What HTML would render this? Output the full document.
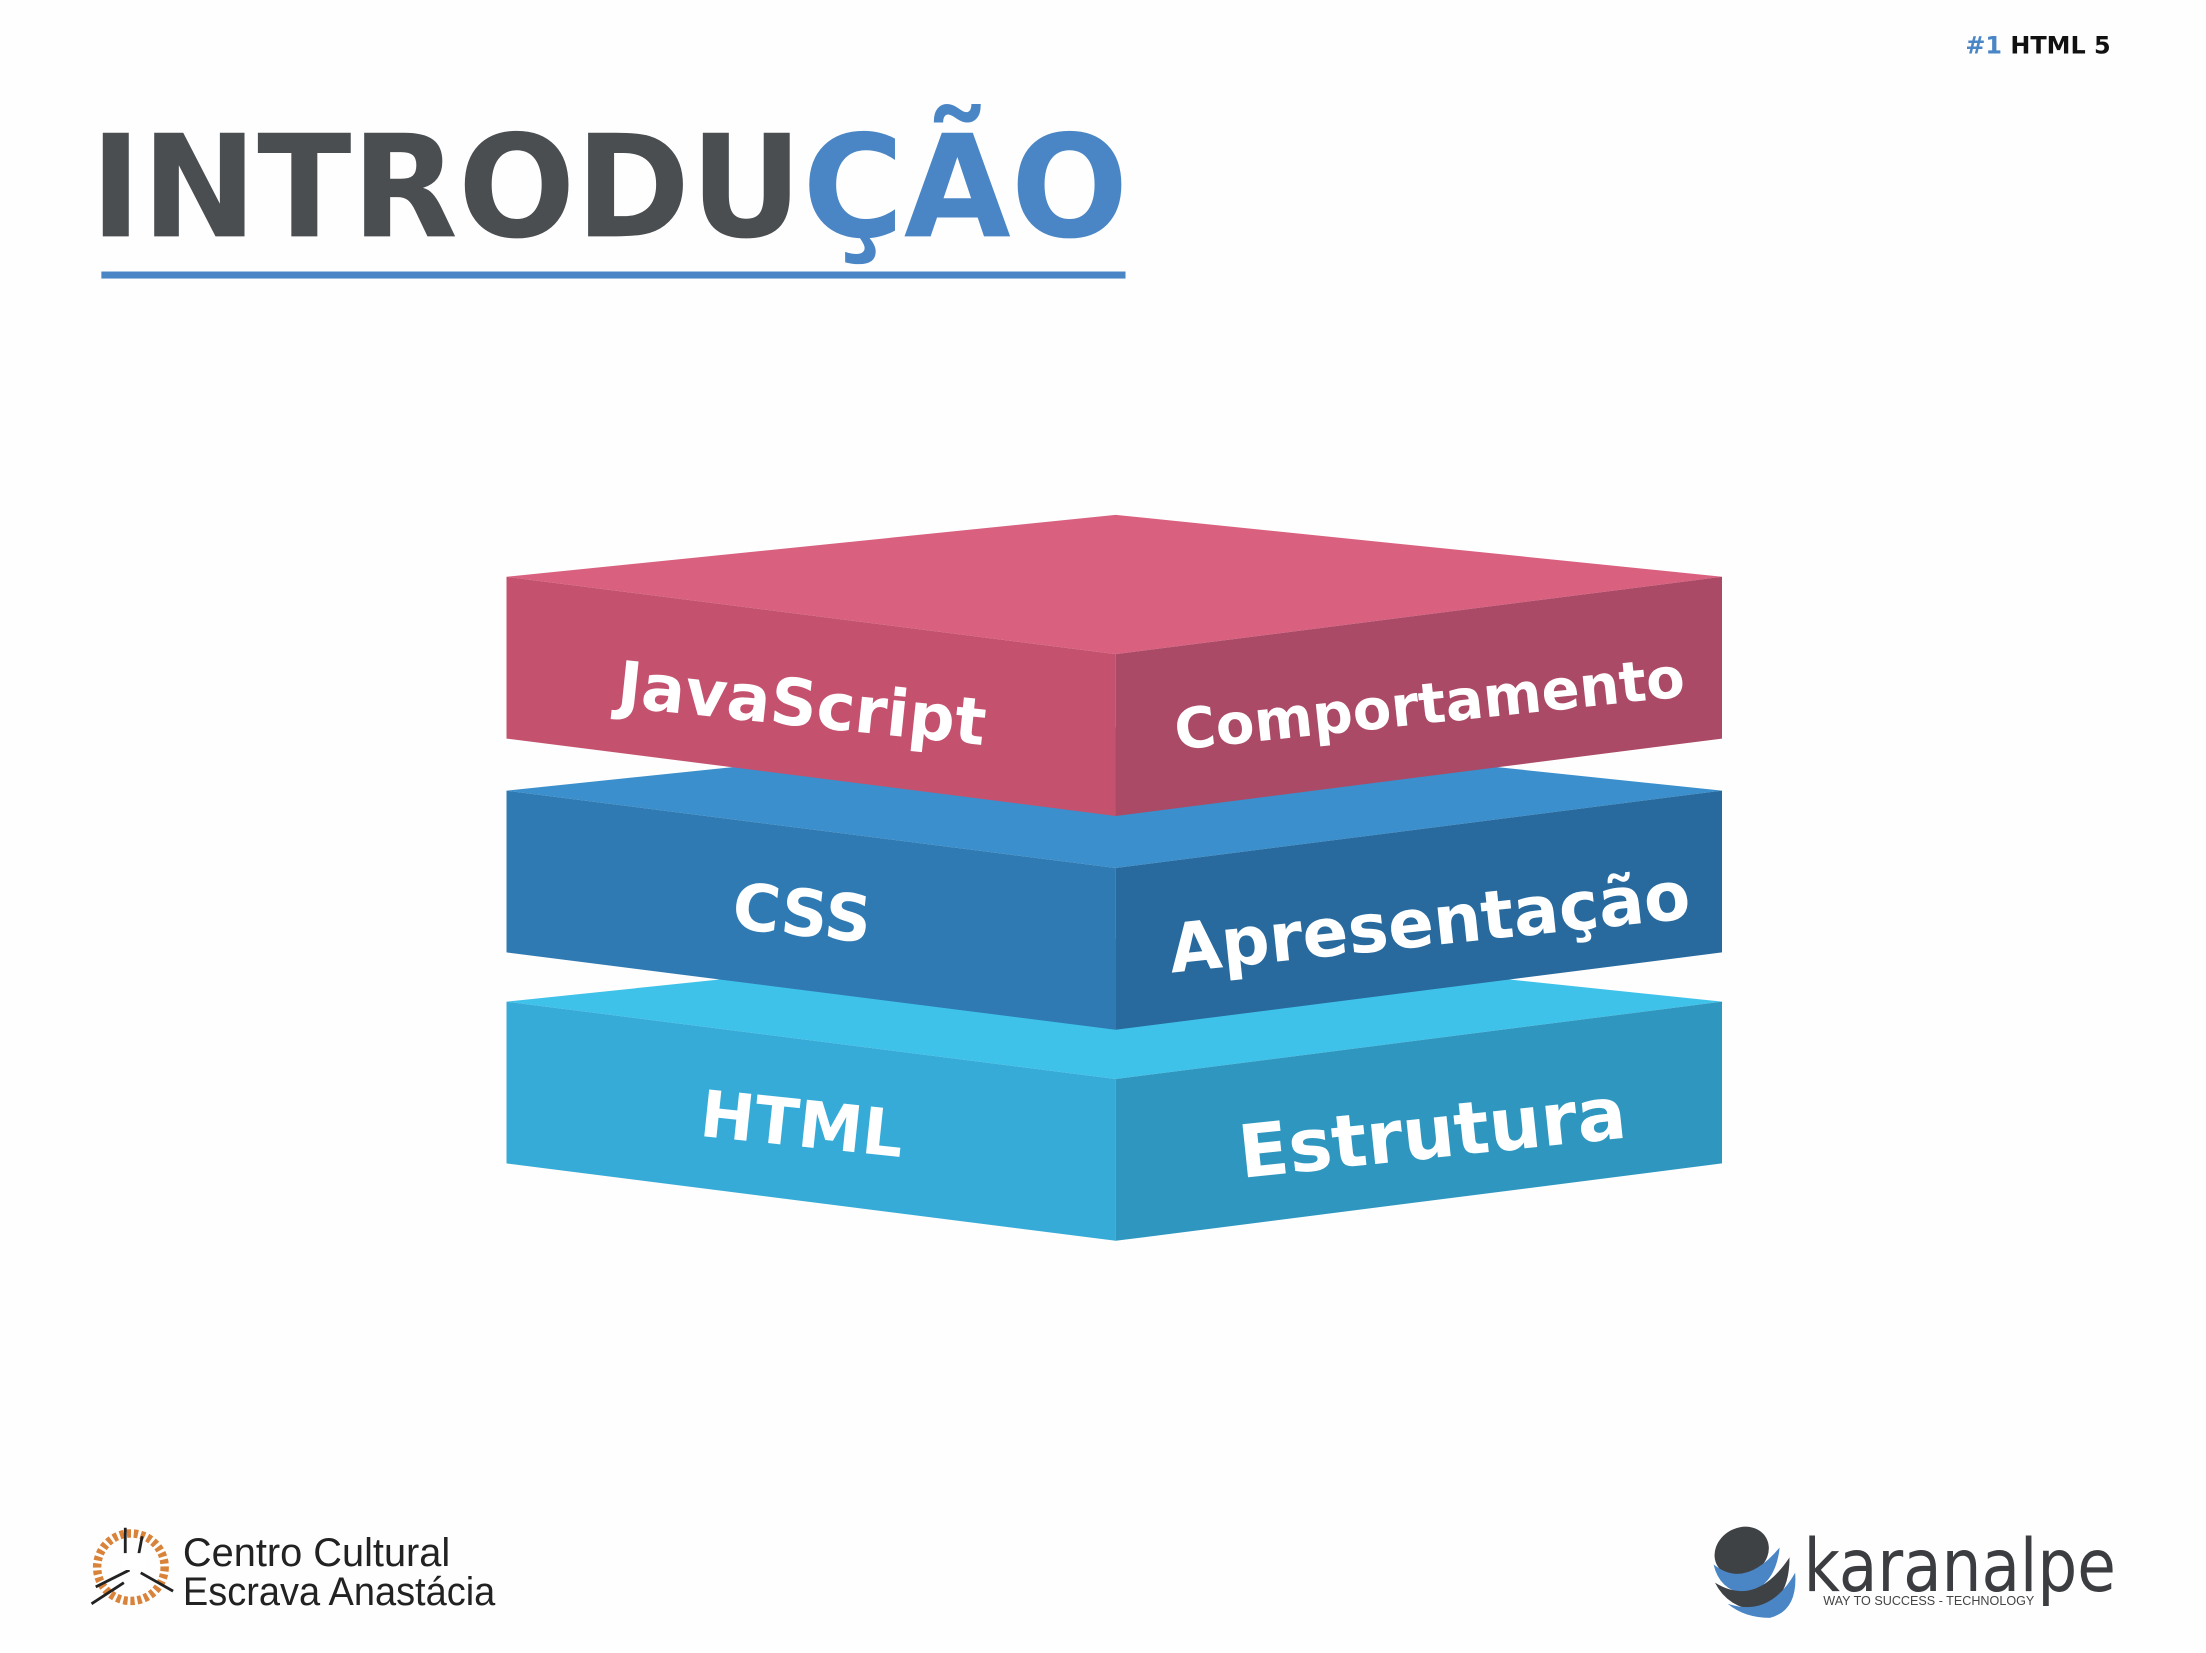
<!DOCTYPE html>
<html><head><meta charset="utf-8"><style>
html,body{margin:0;padding:0;background:#fff;width:2206px;height:1653px;overflow:hidden}
svg{display:block}
</style></head><body>
<svg width="2206" height="1653" viewBox="0 0 1568 1175" xmlns="http://www.w3.org/2000/svg">
<rect width="1568" height="1175" fill="#fefefe"/>
<text x="1397" y="38" font-family="DejaVu Sans, sans-serif" font-weight="bold" font-size="17"><tspan fill="#4a86c5">#1</tspan><tspan fill="#111"> HTML 5</tspan></text>
<text x="64" y="168" font-family="DejaVu Sans, sans-serif" font-weight="bold" font-size="101" textLength="738" lengthAdjust="spacingAndGlyphs"><tspan fill="#4a4e51">INTRODU</tspan><tspan fill="#4a86c5">ÇÃO</tspan></text>
<rect x="72" y="193" width="728" height="5" fill="#4a86c5"/>

<!-- HTML layer -->
<polygon points="360,712 793,667 1224,712 793,767" fill="#3ec2ea"/>
<polygon points="360,712 793,767 793,882 360,827" fill="#36abd7"/>
<polygon points="793,767 1224,712 1224,827 793,882" fill="#2f97bf"/>
<!-- CSS layer -->
<polygon points="360,562 793,517 1224,562 793,617" fill="#3a8fcc"/>
<polygon points="360,562 793,617 793,732 360,677" fill="#2f7ab3"/>
<polygon points="793,617 1224,562 1224,677 793,732" fill="#286a9e"/>
<!-- JS layer -->
<polygon points="360,410 793,366 1224,410 793,465" fill="#da607f"/>
<polygon points="360,410 793,465 793,580 360,525" fill="#c4526f"/>
<polygon points="793,465 1224,410 1224,525 793,580" fill="#aa4a66"/>

<g font-family="DejaVu Sans, sans-serif" font-weight="bold" fill="#fff" text-anchor="middle">
<text x="570" y="516" font-size="46" transform="rotate(6 570 500)">JavaScript</text>
<text x="570" y="665" font-size="46" transform="rotate(6 570 650)">CSS</text>
<text x="570" y="815" font-size="46" transform="rotate(6 570 800)">HTML</text>
</g>
<g font-family="DejaVu Sans, sans-serif" fill="#fff" text-anchor="middle" font-weight="600">
<text x="1016" y="514" font-size="40" transform="rotate(-6 1016 500)">Comportamento</text>
<text x="1016" y="672" font-size="48" transform="rotate(-6 1016 655)">Apresentação</text>
<text x="1018" y="823" font-size="52" transform="rotate(-6 1018 805)">Estrutura</text>
</g>

<!-- Centro Cultural logo -->
<g>
<circle cx="93" cy="1114" r="24" fill="none" stroke="#d8823a" stroke-width="6" stroke-dasharray="3 2"/>
<path d="M89 1086 L89 1112 M101 1092 L97 1113 M68 1128 L92 1116 M100 1118 L123 1131 M65 1140 L88 1125" stroke="#222" stroke-width="2"/>
<rect x="86" y="1104" width="18" height="12" fill="#fff"/>
</g>
<text x="130" y="1113" font-family="Liberation Sans, sans-serif" font-size="28" fill="#222" textLength="190" lengthAdjust="spacingAndGlyphs">Centro Cultural</text>
<text x="130" y="1141" font-family="Liberation Sans, sans-serif" font-size="28" fill="#222" textLength="222" lengthAdjust="spacingAndGlyphs">Escrava Anastácia</text>

<!-- Karanalpe logo -->
<g>
<ellipse cx="1238" cy="1103" rx="20" ry="17" fill="#3f4245" transform="rotate(-30 1238 1103)"/>
<path d="M1218 1112 Q1240 1130 1265 1100 Q1262 1128 1240 1133 Q1222 1130 1218 1112Z" fill="#4a86c5"/>
<path d="M1219 1125 Q1248 1143 1272 1107 Q1272 1138 1250 1145 Q1228 1143 1219 1125Z" fill="#3f4245"/>
<path d="M1228 1140 Q1258 1150 1276 1118 Q1278 1145 1258 1150 Q1240 1150 1228 1140Z" fill="#4a86c5"/>
</g>
<text x="1282" y="1131" font-family="DejaVu Sans, sans-serif" font-size="52" fill="#3c3d40" textLength="222" lengthAdjust="spacingAndGlyphs">karanalpe</text>
<text x="1296" y="1141" font-family="Liberation Sans, sans-serif" font-size="9" fill="#444" textLength="150" lengthAdjust="spacingAndGlyphs">WAY TO SUCCESS - TECHNOLOGY</text>
</svg>
</body></html>
